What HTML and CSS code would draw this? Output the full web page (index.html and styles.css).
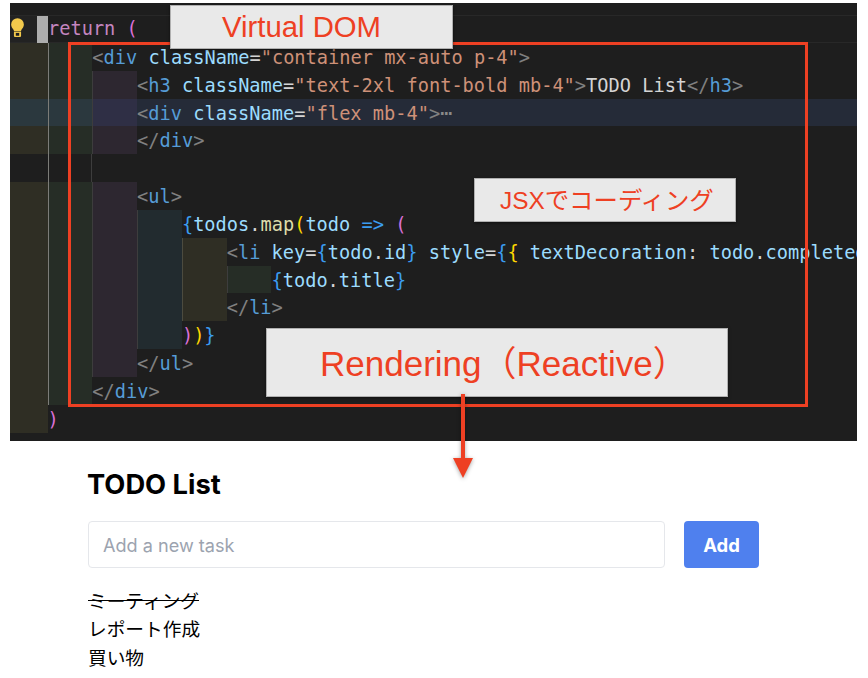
FILE: index.html
```html
<!DOCTYPE html>
<html lang="ja">
<head>
<meta charset="utf-8">
<title>TODO List</title>
<link rel="stylesheet" href="styles.css">
</head>
<body>
<section class="editor">
  <div class="line first"><span class="bulb-cell"><svg class="bulb" width="15" height="21" viewBox="0 0 16 22"><path d="M8 1a6.8 6.8 0 0 0-6.8 6.8c0 2.6 1.500 3.900 2.400 5.200.4.6.6 1.200.6 1.900h7.600c0-.7.2-1.300.6-1.900.9-1.300 2.400-2.600 2.400-5.200A6.800 6.800 0 0 0 8 1z" fill="#f2c94c"/><path d="M4.200 15.600h7.600V20a1.200 1.200 0 0 1-1.200 1.200H5.400A1.200 1.200 0 0 1 4.200 20z" fill="#f2c94c"/><rect x="6.200" y="16.800" width="3.600" height="3" fill="#1e1e1e"/></svg></span><span class="cursor"></span><span class="code"><i class="kw">return</i> <i class="pu">(</i></span></div>
  <div class="line"><b class="g1"></b><b class="g2"></b><span class="code"><i class="p">&lt;</i><i class="t">div</i> <i class="a">className</i><i class="x">=</i><i class="s">"container mx-auto p-4"</i><i class="p">&gt;</i></span></div>
  <div class="line"><b class="g1"></b><b class="g2"></b><b class="g3"></b><span class="code"><i class="p">&lt;</i><i class="t">h3</i> <i class="a">className</i><i class="x">=</i><i class="s">"text-2xl font-bold mb-4"</i><i class="p">&gt;</i><i class="x">TODO List</i><i class="p">&lt;/</i><i class="t">h3</i><i class="p">&gt;</i></span></div>
  <div class="line active"><b class="g1"></b><b class="g2"></b><b class="g3"></b><span class="code"><i class="p">&lt;</i><i class="t">div</i> <i class="a">className</i><i class="x">=</i><i class="s">"flex mb-4"</i><i class="p">&gt;</i><i class="fold">⋯</i></span></div>
  <div class="line"><b class="g1"></b><b class="g2"></b><b class="g3"></b><span class="code"><i class="p">&lt;/</i><i class="t">div</i><i class="p">&gt;</i></span></div>
  <div class="line"><b class="g0"></b><b class="g0b"></b><span class="code"> </span></div>
  <div class="line"><b class="g1"></b><b class="g2"></b><b class="g3"></b><span class="code"><i class="p">&lt;</i><i class="t">ul</i><i class="p">&gt;</i></span></div>
  <div class="line"><b class="g1"></b><b class="g2"></b><b class="g3"></b><b class="g4"></b><span class="code"><i class="bl">{</i><i class="a">todos</i><i class="x">.</i><i class="f">map</i><i class="ye">(</i><i class="a">todo</i> <i class="bl">=&gt;</i> <i class="pu">(</i></span></div>
  <div class="line"><b class="g1"></b><b class="g2"></b><b class="g3"></b><b class="g4"></b><b class="g5"></b><span class="code"><i class="p">&lt;</i><i class="t">li</i> <i class="a">key</i><i class="x">=</i><i class="bl">{</i><i class="a">todo</i><i class="x">.</i><i class="a">id</i><i class="bl">}</i> <i class="a">style</i><i class="x">=</i><i class="bl">{</i><i class="ye">{</i> <i class="a">textDecoration</i><i class="x">:</i> <i class="a">todo</i><i class="x">.</i><i class="a">completed</i></span></div>
  <div class="line"><b class="g1"></b><b class="g2"></b><b class="g3"></b><b class="g4"></b><b class="g5"></b><b class="g6"></b><span class="code"><i class="bl">{</i><i class="a">todo</i><i class="x">.</i><i class="a">title</i><i class="bl">}</i></span></div>
  <div class="line"><b class="g1"></b><b class="g2"></b><b class="g3"></b><b class="g4"></b><b class="g5"></b><span class="code"><i class="p">&lt;/</i><i class="t">li</i><i class="p">&gt;</i></span></div>
  <div class="line"><b class="g1"></b><b class="g2"></b><b class="g3"></b><b class="g4"></b><span class="code"><i class="pu">)</i><i class="ye">)</i><i class="bl">}</i></span></div>
  <div class="line"><b class="g1"></b><b class="g2"></b><b class="g3"></b><span class="code"><i class="p">&lt;/</i><i class="t">ul</i><i class="p">&gt;</i></span></div>
  <div class="line"><b class="g1"></b><b class="g2"></b><span class="code"><i class="p">&lt;/</i><i class="t">div</i><i class="p">&gt;</i></span></div>
  <div class="line"><b class="g1"></b><span class="code"><i class="pu">)</i></span></div>

  <div class="frame"></div>
  <div class="note note-vdom">Virtual DOM</div>
  <div class="note note-jsx">JSXでコーディング</div>
  <div class="note note-render">Rendering（Reactive）</div>
</section>
<svg class="arrow" width="28" height="90" viewBox="0 0 28 90"><path d="M12 0h4v68h-4z" fill="#ee4023"/><path d="M4 64h20L14 84z" fill="#ee4023"/></svg>

<main class="app">
  <h3 class="title">TODO List</h3>
  <div class="form">
    <input class="field" placeholder="Add a new task">
    <button class="add">Add</button>
  </div>
  <ul class="todos">
    <li class="done">ミーティング</li>
    <li>レポート作成</li>
    <li>買い物</li>
  </ul>
</main>
</body>
</html>
```

FILE: styles.css
```css
* { box-sizing: border-box; }
html, body { margin: 0; padding: 0; background: #fff; }
body { position: relative; width: 868px; height: 678px; overflow: hidden; }

.editor {
  position: relative;
  margin: 3px 11px 0 10px;
  height: 438px;
  padding-top: 12px;
  background: #1e1e1e;
  overflow: hidden;
  font-family: "DejaVu Sans Mono", monospace;
  font-size: 18.65px;
  color: #d4d4d4;
}
.line {
  display: flex;
  height: 27.85px;
  line-height: 27.85px;
  white-space: pre;
}
.line.first { border-top: 1px solid #282828; border-bottom: 1px solid #282828; line-height: 26px; }
.line.active { background: #252b38; }
.line b { display: block; flex: none; width: 44.8px; }
.line b.g1 { width: 37.5px; background: #2f2e24; }
.line b.g2 { background: #262d26; border-left: 1.500px solid #7c7c78; }
.line b.g3 { background: #2d2730; border-left: 1px solid #3d3d3d; }
.line b.g4 { background: #222b2f; border-left: 1px solid #3d3d3d; }
.line b.g5 { background: #2f2e24; border-left: 1px solid #4c4b3f; }
.line b.g6 { background: #262d26; border-left: 1px solid #3d3d3d; }
.line b.g0 { width: 37.5px; }
.line b.g0b { border-left: 1.500px solid #7c7c78; border-right: 1px solid #3d3d3d; }
.line.active b.g1, .line.active b.g2 { background: #2b383e; }
.line.active b.g3 { background: #2f2f45; }

.bulb-cell { flex: none; width: 27px; display: flex; align-items: center; background: #222; }
.bulb { display: block; margin-top: -2px; }
.cursor { flex: none; width: 11px; height: 27px; background: #aeaeae; }
.code { display: block; flex: none; padding-top: 1px; }
.first .code { padding-top: 0; }
.code i { font-style: normal; }
.p { color: #808080; }
.t { color: #569cd6; }
.a { color: #9cdcfe; }
.s { color: #ce9178; }
.x { color: #d4d4d4; }
.f { color: #dcdcaa; }
.kw { color: #c586c0; }
.pu { color: #da70d6; }
.ye { color: #ffd700; }
.bl { color: #3b9cf0; }
.fold { color: #8a8a8a; font-size: 20px; line-height: 20px; }

.frame {
  position: absolute;
  left: 58px;
  top: 39px;
  width: 740px;
  height: 365px;
  border: 3px solid #ee4023;
}
.note {
  position: absolute;
  display: flex;
  align-items: center;
  background: #e9e9e9;
  border: 1px solid #b0b0b0;
  box-shadow: 0 1px 3px rgba(0, 0, 0, .5);
  color: #ee4023;
  font-family: "Liberation Sans", "Noto Sans CJK JP", sans-serif;
  white-space: nowrap;
}
.note-vdom { left: 160px; top: 2px; width: 283px; height: 44px; padding-left: 51px; font-size: 29.3px; }
.note-jsx { left: 464px; top: 175px; width: 262px; height: 44px; padding: 0 0 4px 25px; font-size: 24.4px; }
.note-render { left: 256px; top: 325px; width: 462px; height: 69px; padding: 0 0 4px 53px; font-size: 35px; }

.arrow { position: absolute; left: 449px; top: 394px; filter: drop-shadow(0 1px 2px rgba(0, 0, 0, .35)); }

.app {
  width: 671px;
  margin-left: 88px;
  padding-top: 28px;
  font-family: Inter, "Noto Sans CJK JP", sans-serif;
  color: #000;
}
.title { margin: 0 0 20px -1px; font-size: 27.3px; line-height: 32px; font-weight: 700; }
.form { display: flex; gap: 19px; height: 47px; margin-bottom: 18px; }
.field {
  flex: 1;
  min-width: 0;
  border: 1.500px solid #e5e7eb;
  border-radius: 4px;
  padding: 0 14px;
  font: 18.1px Inter, sans-serif;
  outline: none;
}
.field::placeholder { color: #9ca3af; opacity: 1; }
.add {
  width: 75px;
  border: 0;
  border-radius: 4px;
  background: #4f80ee;
  color: #fff;
  font: 700 18.500px Inter, sans-serif;
}
.todos { list-style: none; margin: 0; padding: 0; font-size: 18.7px; line-height: 28.300px; font-family: "Noto Sans CJK JP", sans-serif; }
.done { text-decoration: line-through; }
```
